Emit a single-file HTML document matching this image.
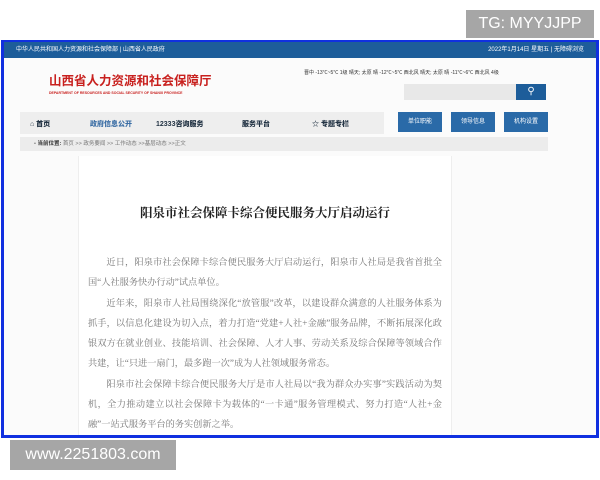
<!DOCTYPE html>
<html><head><meta charset="utf-8"><style>
*{margin:0;padding:0;box-sizing:border-box}
body{width:600px;height:480px;background:#fff;position:relative;overflow:hidden;font-family:"Liberation Sans","Noto Sans CJK SC",sans-serif}
.tg{position:absolute;left:466px;top:10px;width:128px;height:28px;background:#a6a6a6;color:#fff;font-size:16px;line-height:28px;text-align:center}
.ww{position:absolute;left:10px;top:440px;width:166px;height:30px;background:#a6a6a6;color:#fff;font-size:16px;line-height:30px;text-align:center}
.frame{position:absolute;left:1px;top:40px;width:598px;height:398px;border:3px solid #1030e0;border-top-width:2px;background:#fbfbfb;overflow:hidden}
.top{position:absolute;left:0;top:0;width:100%;height:16px;background:#1d5d9a;color:#fff;font-size:6px;line-height:16px;padding:0 12px}
.top span{float:right}
.logo{position:absolute;left:45px;top:28px;color:#c8201e;font-size:12.5px;font-weight:bold;font-family:"Liberation Sans","Noto Sans CJK SC",sans-serif;white-space:nowrap}
.logo small{display:block;font-size:3.5px;margin-top:2px;font-weight:bold}
.wea{position:absolute;left:300px;top:27px;font-size:5px;color:#333}
.search{position:absolute;left:400px;top:42px;width:112px;height:16px;background:#e8e8e8}
.sbtn{position:absolute;left:512px;top:42px;width:30px;height:16px;background:#1d5d9a;color:#fff;font-size:10px;text-align:center;line-height:16px}
.nav{position:absolute;left:16px;top:70px;width:364px;height:22px;background:#eeeeee;font-size:7px;font-weight:bold;color:#234}
.nav b{position:absolute;top:7px}
.nb{position:absolute;top:70px;width:44px;height:20px;background:#2a6aa8;color:#fff;font-size:6px;line-height:20px;text-align:center}
.crumb{position:absolute;left:16px;top:95px;width:528px;height:14px;background:#ececec;font-size:5.5px;color:#777;line-height:14px;padding-left:14px}
.art{position:absolute;left:74px;top:114px;width:374px;height:300px;background:#fff;border-left:1px solid #eee;border-right:1px solid #eee}
h1{position:absolute;left:0;width:100%;top:47px;text-align:center;font-size:12.5px;font-family:"Liberation Serif","Noto Serif CJK SC",serif;color:#222}
.p{position:absolute;left:9px;top:96px;width:354px;font-size:9.2px;line-height:20.3px;color:#777;font-family:"Liberation Serif","Noto Serif CJK SC",serif;text-align:justify}
.p p{text-indent:2em}
</style></head><body>
<div class="tg">TG: MYYJJPP</div>
<div class="frame">
<div class="top">中华人民共和国人力资源和社会保障部 | 山西省人民政府<span>2022年1月14日 星期五 | 无障碍浏览</span></div>
<div class="logo">山西省人力资源和社会保障厅<small>DEPARTMENT OF RESOURCES AND SOCIAL SECURITY OF SHANXI PROVINCE</small></div>
<div class="wea">晋中 -13℃~5℃ 1级 晴天; 太原 晴 -12℃~5℃ 西北风 晴天; 太原 晴 -11℃~6℃ 西北风 4级</div>
<div class="search"></div><div class="sbtn">⚲</div>
<div class="nav"><b style="left:10px">⌂ 首页</b><b style="left:70px;color:#3b6ea5">政府信息公开</b><b style="left:136px">12333咨询服务</b><b style="left:222px">服务平台</b><b style="left:292px">☆ 专题专栏</b></div>
<div class="nb" style="left:394px">单位职能</div><div class="nb" style="left:447px">领导信息</div><div class="nb" style="left:500px">机构设置</div>
<div class="crumb">• <b style="color:#333">当前位置:</b> 首页 &gt;&gt; 政务要闻 &gt;&gt; 工作动态 &gt;&gt;基层动态 &gt;&gt;正文</div>
<div class="art">
<h1>阳泉市社会保障卡综合便民服务大厅启动运行</h1>
<div class="p">
<p>近日，阳泉市社会保障卡综合便民服务大厅启动运行，阳泉市人社局是我省首批全国“人社服务快办行动”试点单位。</p>
<p>近年来，阳泉市人社局围绕深化“放管服”改革，以建设群众满意的人社服务体系为抓手，以信息化建设为切入点，着力打造“党建+人社+金融”服务品牌，不断拓展深化政银双方在就业创业、技能培训、社会保障、人才人事、劳动关系及综合保障等领域合作共建，让“只进一扇门，最多跑一次”成为人社领域服务常态。</p>
<p>阳泉市社会保障卡综合便民服务大厅是市人社局以“我为群众办实事”实践活动为契机，全力推动建立以社会保障卡为载体的“一卡通”服务管理模式、努力打造“人社+金融”一站式服务平台的务实创新之举。</p>
</div></div>
</div>
<div class="ww">www.2251803.com</div>
</body></html>
